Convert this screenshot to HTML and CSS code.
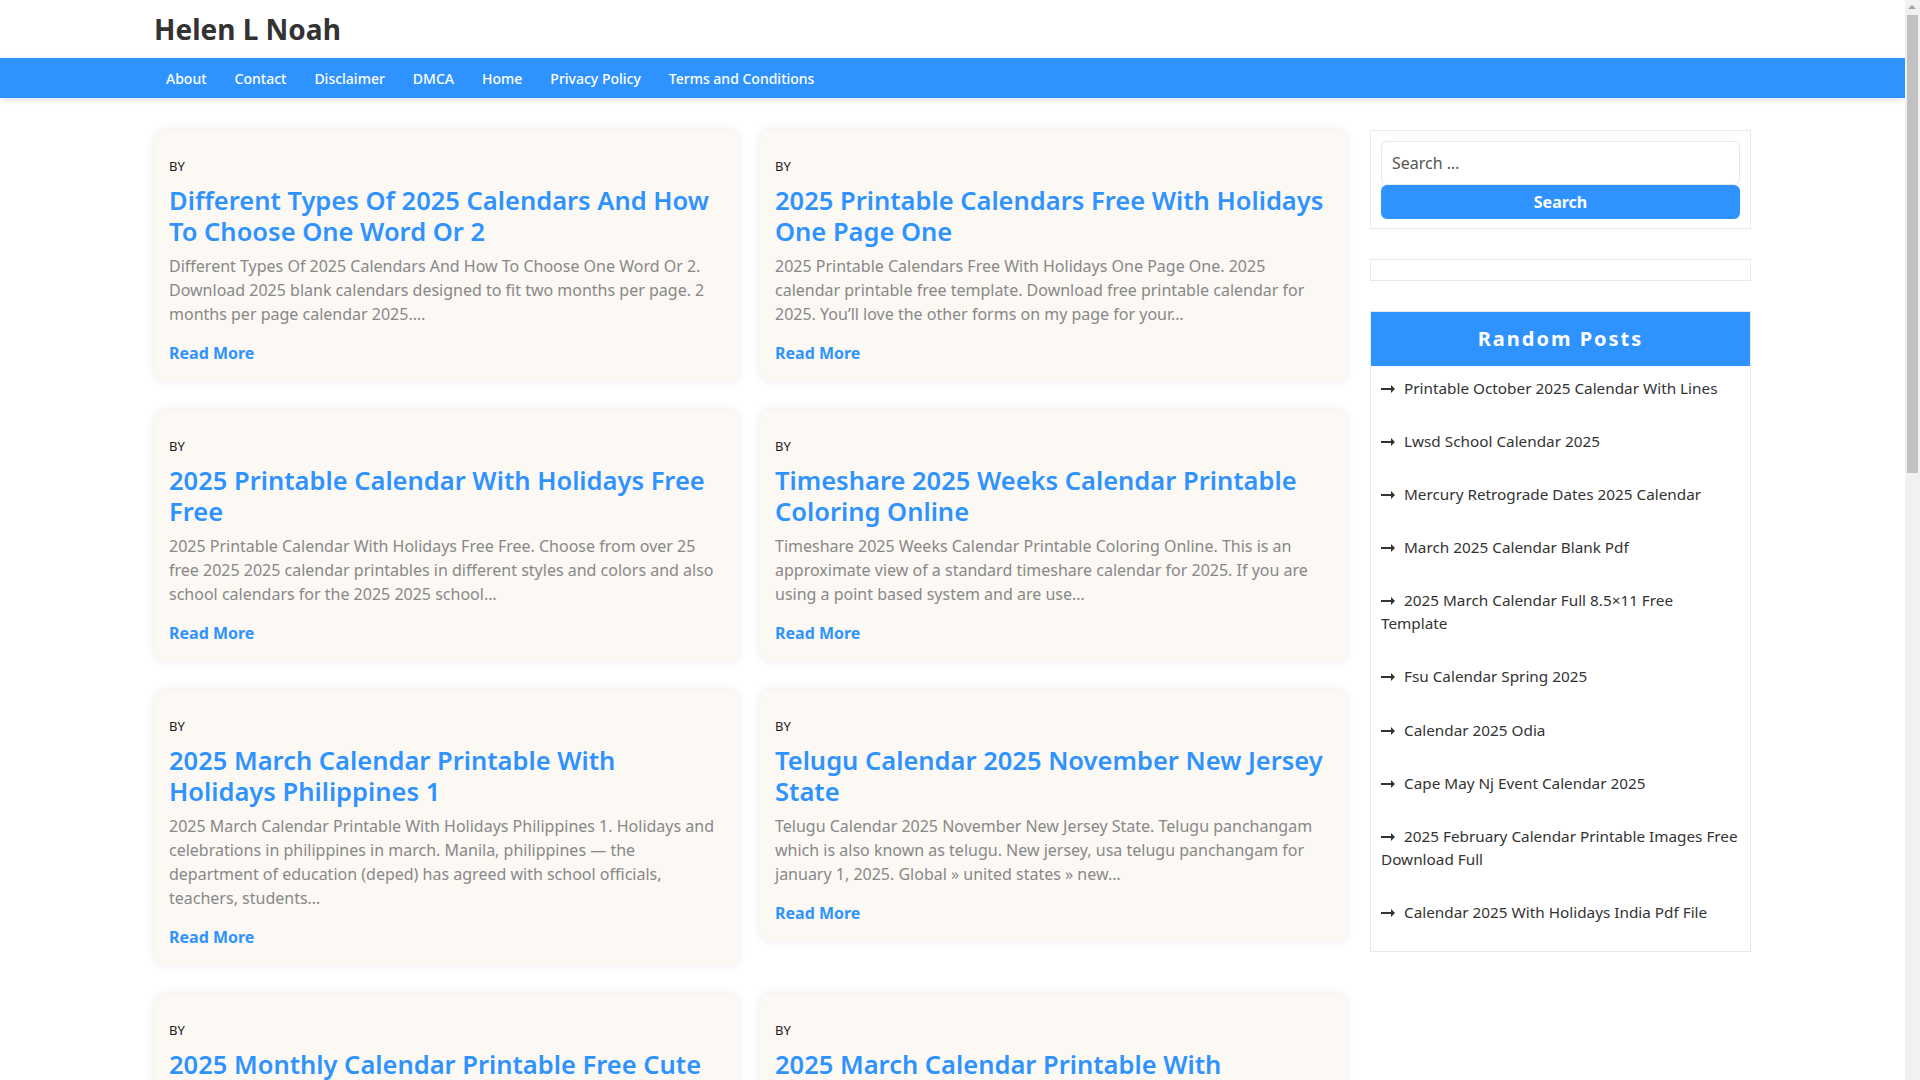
FILE: index.html
```html
<!DOCTYPE html>
<html lang="en">
<head>
<meta charset="utf-8">
<title>Helen L Noah</title>
<link rel="stylesheet" href="styles.css">
</head>
<body>
<header class="site-header">
  <div class="container">
    <a class="site-title" href="#">Helen L Noah</a>
  </div>
</header>
<nav class="main-nav">
  <div class="container nav-inner">
    <a href="#">About</a>
    <a href="#">Contact</a>
    <a href="#">Disclaimer</a>
    <a href="#">DMCA</a>
    <a href="#">Home</a>
    <a href="#">Privacy Policy</a>
    <a href="#">Terms and Conditions</a>
  </div>
</nav>
<div class="container layout">
  <main class="posts">
    <article class="card">
      <div class="by">BY</div>
      <h2 class="card-title"><a href="#">Different Types Of 2025 Calendars And How To Choose One Word Or 2</a></h2>
      <p class="excerpt">Different Types Of 2025 Calendars And How To Choose One Word Or 2. Download 2025 blank calendars designed to fit two months per page. 2 months per page calendar 2025.…</p>
      <a class="read-more" href="#">Read More</a>
    </article>
    <article class="card">
      <div class="by">BY</div>
      <h2 class="card-title"><a href="#">2025 Printable Calendars Free With Holidays One Page One</a></h2>
      <p class="excerpt">2025 Printable Calendars Free With Holidays One Page One. 2025 calendar printable free template. Download free printable calendar for 2025. You’ll love the other forms on my page for your…</p>
      <a class="read-more" href="#">Read More</a>
    </article>
    <article class="card">
      <div class="by">BY</div>
      <h2 class="card-title"><a href="#">2025 Printable Calendar With Holidays Free Free</a></h2>
      <p class="excerpt">2025 Printable Calendar With Holidays Free Free. Choose from over 25 free 2025 2025 calendar printables in different styles and colors and also school calendars for the 2025 2025 school…</p>
      <a class="read-more" href="#">Read More</a>
    </article>
    <article class="card">
      <div class="by">BY</div>
      <h2 class="card-title"><a href="#">Timeshare 2025 Weeks Calendar Printable Coloring Online</a></h2>
      <p class="excerpt">Timeshare 2025 Weeks Calendar Printable Coloring Online. This is an approximate view of a standard timeshare calendar for 2025. If you are using a point based system and are use…</p>
      <a class="read-more" href="#">Read More</a>
    </article>
    <article class="card">
      <div class="by">BY</div>
      <h2 class="card-title"><a href="#">2025 March Calendar Printable With Holidays Philippines 1</a></h2>
      <p class="excerpt">2025 March Calendar Printable With Holidays Philippines 1. Holidays and celebrations in philippines in march. Manila, philippines — the department of education (deped) has agreed with school officials, teachers, students…</p>
      <a class="read-more" href="#">Read More</a>
    </article>
    <article class="card">
      <div class="by">BY</div>
      <h2 class="card-title"><a href="#">Telugu Calendar 2025 November New Jersey State</a></h2>
      <p class="excerpt">Telugu Calendar 2025 November New Jersey State. Telugu panchangam which is also known as telugu. New jersey, usa telugu panchangam for january 1, 2025. Global » united states » new…</p>
      <a class="read-more" href="#">Read More</a>
    </article>
    <article class="card">
      <div class="by">BY</div>
      <h2 class="card-title"><a href="#">2025 Monthly Calendar Printable Free Cute</a></h2>
      <p class="excerpt">2025 Monthly Calendar Printable Free Cute. Free printable monthly calendars for 2025 with cute designs for kids and adults. Print them at home…</p>
      <a class="read-more" href="#">Read More</a>
    </article>
    <article class="card">
      <div class="by">BY</div>
      <h2 class="card-title"><a href="#">2025 March Calendar Printable With Holidays Free</a></h2>
      <p class="excerpt">2025 March Calendar Printable With Holidays Free. Download a free printable march 2025 calendar with holidays in pdf and image formats…</p>
      <a class="read-more" href="#">Read More</a>
    </article>
  </main>
  <aside class="sidebar">
    <section class="widget search-widget">
      <form class="search-form">
        <input class="search-field" type="search" placeholder="Search …">
        <button class="search-submit" type="button">Search</button>
      </form>
    </section>
    <section class="widget empty-widget"></section>
    <section class="widget random-widget">
      <h3 class="widget-title">Random Posts</h3>
      <ul class="random-list">
        <li><svg class="arrow" viewBox="0 0 14 8"><path d="M0 3h10V0l4 4-4 4V5H0z"/></svg><a href="#">Printable October 2025 Calendar With Lines</a></li>
        <li><svg class="arrow" viewBox="0 0 14 8"><path d="M0 3h10V0l4 4-4 4V5H0z"/></svg><a href="#">Lwsd School Calendar 2025</a></li>
        <li><svg class="arrow" viewBox="0 0 14 8"><path d="M0 3h10V0l4 4-4 4V5H0z"/></svg><a href="#">Mercury Retrograde Dates 2025 Calendar</a></li>
        <li><svg class="arrow" viewBox="0 0 14 8"><path d="M0 3h10V0l4 4-4 4V5H0z"/></svg><a href="#">March 2025 Calendar Blank Pdf</a></li>
        <li><svg class="arrow" viewBox="0 0 14 8"><path d="M0 3h10V0l4 4-4 4V5H0z"/></svg><a href="#">2025 March Calendar Full 8.5×11 Free Template</a></li>
        <li><svg class="arrow" viewBox="0 0 14 8"><path d="M0 3h10V0l4 4-4 4V5H0z"/></svg><a href="#">Fsu Calendar Spring 2025</a></li>
        <li><svg class="arrow" viewBox="0 0 14 8"><path d="M0 3h10V0l4 4-4 4V5H0z"/></svg><a href="#">Calendar 2025 Odia</a></li>
        <li><svg class="arrow" viewBox="0 0 14 8"><path d="M0 3h10V0l4 4-4 4V5H0z"/></svg><a href="#">Cape May Nj Event Calendar 2025</a></li>
        <li><svg class="arrow" viewBox="0 0 14 8"><path d="M0 3h10V0l4 4-4 4V5H0z"/></svg><a href="#">2025 February Calendar Printable Images Free Download Full</a></li>
        <li><svg class="arrow" viewBox="0 0 14 8"><path d="M0 3h10V0l4 4-4 4V5H0z"/></svg><a href="#">Calendar 2025 With Holidays India Pdf File</a></li>
      </ul>
    </section>
  </aside>
</div>
<div class="scrollbar" aria-hidden="true">
  <div class="scroll-up"></div>
  <div class="scroll-thumb"></div>
</div>
</body>
</html>
```

FILE: styles.css
```css
* { box-sizing: border-box; }
html, body { margin: 0; padding: 0; }
body {
  font-family: "Noto Sans", "Open Sans", sans-serif;
  color: #333;
  background: #fff;
  margin-right: 15px;
}
a { text-decoration: none; color: inherit; }
.container {
  width: 1597px;
  margin: 0 auto;
}
.site-header {
  height: 58px;
  display: flex;
  align-items: center;
}
.site-title {
  font-size: 28px;
  font-weight: 700;
  color: #333;
  line-height: 1;
  display: block;
  padding-bottom: 1px;
}
.main-nav {
  background: #2e93ff;
  height: 40px;
  box-shadow: 0 2px 6px rgba(0,0,0,0.12);
}
.nav-inner {
  display: flex;
  align-items: center;
  height: 100%;
}
.nav-inner a {
  color: #fff;
  font-size: 14px;
  font-weight: 500;
  padding: 0 14px;
  line-height: 40px;
  padding-top: 1px;
}
.nav-inner a:first-child { padding-left: 12px; }
.layout {
  display: flex;
  gap: 24px;
  padding-top: 32px;
  align-items: flex-start;
}
.posts {
  width: 1192px;
  display: grid;
  grid-template-columns: 584px 586px;
  column-gap: 22px;
  row-gap: 29px;
  align-items: start;
}
.card {
  background: #fcf8f3;
  border-radius: 10px;
  box-shadow: 0 0 10px rgba(0,0,0,0.09);
  padding: 27px 15px 16px;
}
.by {
  font-size: 13px;
  color: #222;
  line-height: 18px;
}
.card-title {
  margin: 10px 0 8px;
  font-size: 25.5px;
  line-height: 30.5px;
  font-weight: 600;
  color: #2e93ff;
}
.excerpt {
  margin: 0 0 15px;
  font-size: 16px;
  line-height: 24px;
  color: #888;
}
.read-more {
  display: block;
  color: #2e93ff;
  font-weight: 700;
  font-size: 16px;
  line-height: 24px;
}
.sidebar {
  width: 381px;
  display: flex;
  flex-direction: column;
  gap: 30px;
}
.widget {
  border: 1px solid #e8e8f0;
  background: #fff;
}
.search-widget { padding: 10px 10px 9px; }
.search-form { display: flex; flex-direction: column; }
.search-field {
  height: 44px;
  border: 1px solid #e8e8f0;
  border-radius: 6px;
  padding: 0 10px;
  font-family: inherit;
  font-size: 16px;
  color: #555;
  outline: none;
}
.search-field::placeholder { color: #555; }
.search-submit {
  height: 34px;
  border: none;
  border-radius: 6px;
  background: #2e93ff;
  color: #fff;
  font-family: inherit;
  font-weight: 700;
  font-size: 16px;
}
.empty-widget { height: 22px; }
.widget-title {
  margin: 0;
  background: #2e93ff;
  color: #fff;
  text-align: center;
  font-size: 20px;
  letter-spacing: 2px;
  font-weight: 700;
  height: 54px;
  line-height: 54px;
}
.random-list {
  list-style: none;
  margin: 0;
  padding: 0 12px 12px 10px;
}
.random-list li {
  padding: 15.05px 0;
  font-size: 15.3px;
  line-height: 23px;
  color: #333;
}
.random-list li:first-child { padding-top: 11px; }
.arrow {
  width: 14px;
  height: 8px;
  fill: #333;
  margin-right: 9px;
  vertical-align: 1px;
}
.scrollbar {
  position: fixed;
  top: 0;
  right: 0;
  width: 15px;
  height: 100vh;
  background: #f1f1f1;
}
.scroll-up {
  position: absolute;
  top: 5px;
  left: 3px;
  width: 0;
  height: 0;
  border-left: 4px solid transparent;
  border-right: 4px solid transparent;
  border-bottom: 4px solid #a3a3a3;
}
.scroll-thumb {
  position: absolute;
  top: 15px;
  left: 2px;
  width: 11px;
  height: 458px;
  background: #c1c1c1;
}
```
